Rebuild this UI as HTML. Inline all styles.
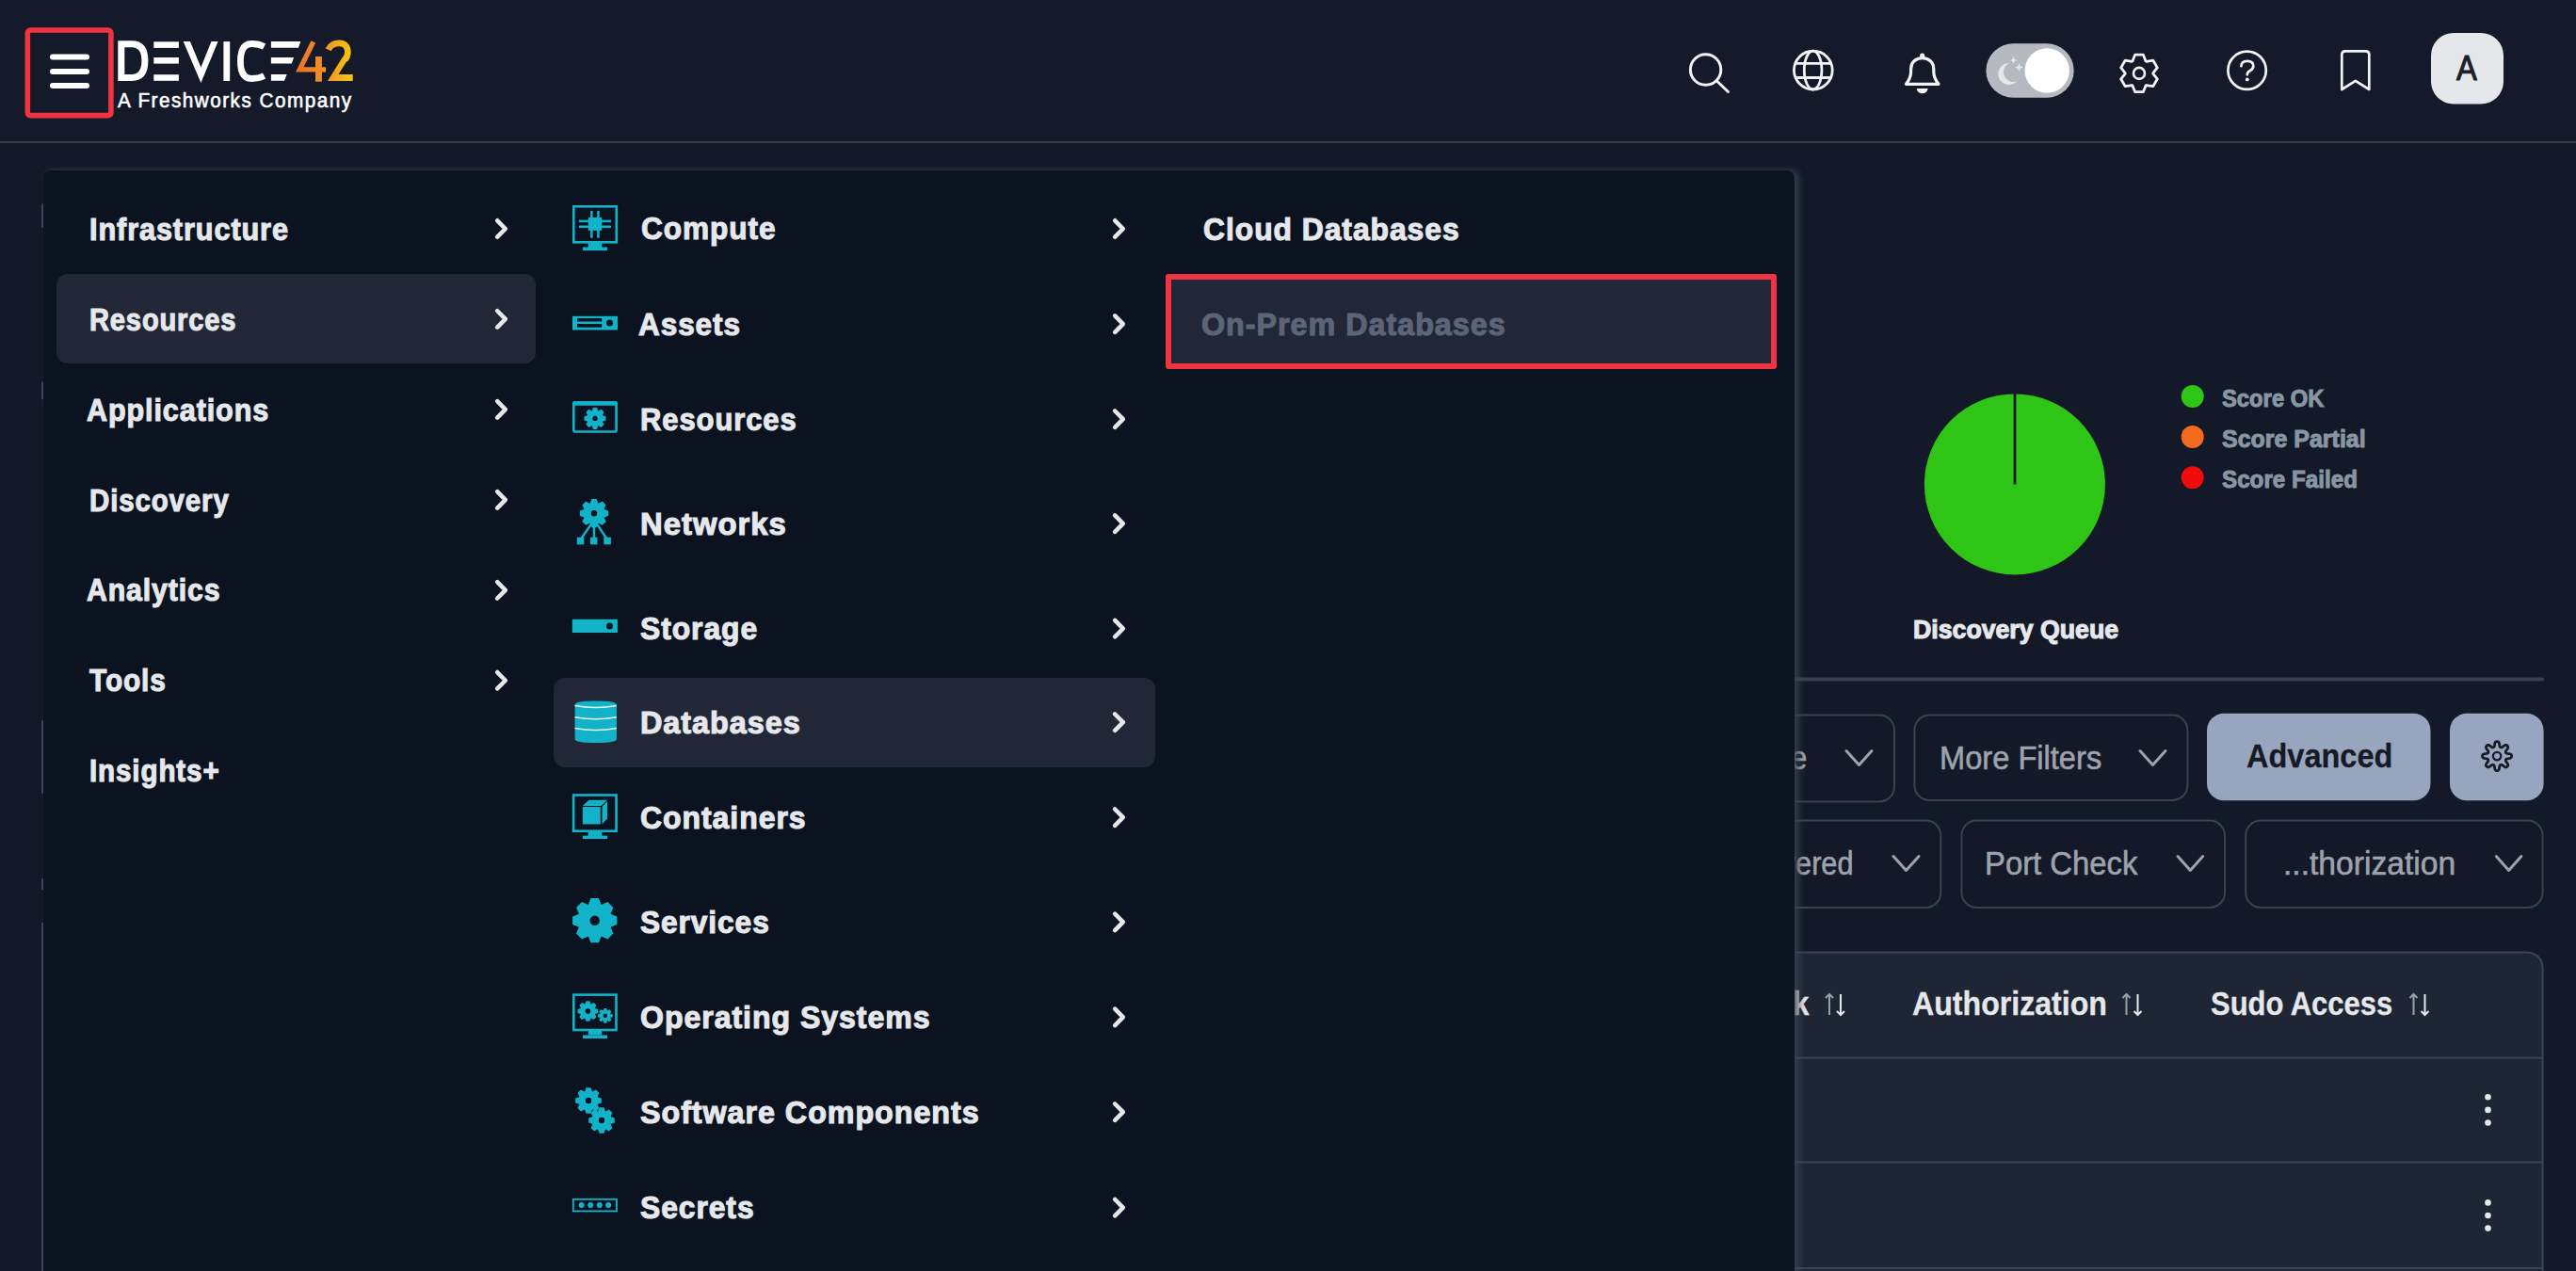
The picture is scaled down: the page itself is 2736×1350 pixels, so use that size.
<!DOCTYPE html>
<html><head><meta charset="utf-8"><style>
html,body{margin:0;padding:0;}
body{width:2736px;height:1350px;overflow:hidden;position:relative;background:#131928;font-family:"Liberation Sans",sans-serif;}
.abs{position:absolute;}
.tx{position:absolute;white-space:nowrap;transform-origin:0 0;}
svg{position:absolute;left:0;top:0;}
</style></head><body>
<svg width="2736" height="1350" viewBox="0 0 2736 1350">
<circle cx="2139.9" cy="514.4" r="96" fill="#2ec516"/>
<rect x="2138.6" y="418" width="2.8" height="96.4" fill="#141a29"/>
<circle cx="2328.7" cy="420.9" r="12" fill="#2ec516"/>
<circle cx="2328.7" cy="464" r="12" fill="#f46a1f"/>
<circle cx="2328.7" cy="507.2" r="12" fill="#f20b0b"/>
<line x1="1800" y1="721.4" x2="2700" y2="721.4" stroke="#3a4150" stroke-width="4" stroke-linecap="round"/>
<rect x="1700" y="759.5" width="312" height="92" rx="16" fill="none" stroke="#3b4250" stroke-width="2"/>
<rect x="2033.4" y="759.5" width="290" height="90.5" rx="16" fill="none" stroke="#3b4250" stroke-width="2"/>
<rect x="2344" y="757.8" width="237.5" height="92.5" rx="18" fill="#97a6be"/>
<rect x="2602" y="757.8" width="99.6" height="92.5" rx="18" fill="#97a6be"/>
<rect x="1700" y="871.5" width="361.3" height="92.4" rx="16" fill="none" stroke="#3b4250" stroke-width="2"/>
<rect x="2083.4" y="871.5" width="279.6" height="92.4" rx="16" fill="none" stroke="#3b4250" stroke-width="2"/>
<rect x="2385.2" y="871.5" width="315.4" height="92.4" rx="16" fill="none" stroke="#3b4250" stroke-width="2"/>
<polyline points="1961,797.5 1974.5,812.5 1988,797.5" fill="none" stroke="#9ea3ab" stroke-width="3" stroke-linecap="round" stroke-linejoin="round"/>
<polyline points="2273,797.5 2286.5,812.5 2300,797.5" fill="none" stroke="#9ea3ab" stroke-width="3" stroke-linecap="round" stroke-linejoin="round"/>
<polyline points="2011,909.5 2024.5,924.5 2038,909.5" fill="none" stroke="#9ea3ab" stroke-width="3" stroke-linecap="round" stroke-linejoin="round"/>
<polyline points="2313,909.5 2326.35,924.5 2339.7,909.5" fill="none" stroke="#9ea3ab" stroke-width="3" stroke-linecap="round" stroke-linejoin="round"/>
<polyline points="2651.3,909.5 2664.6000000000004,924.5 2677.9,909.5" fill="none" stroke="#9ea3ab" stroke-width="3" stroke-linecap="round" stroke-linejoin="round"/>
<path d="M1700,1011.4 H2681.6 Q2700.6,1011.4 2700.6,1030.4 V1360 H1700Z" fill="#1e2636" stroke="#3b4354" stroke-width="2"/>
<rect x="1700" y="1122.7" width="1000" height="2" fill="#3b4354"/>
<rect x="1700" y="1233.4" width="1000" height="2" fill="#3b4354"/>
<rect x="1700" y="1346" width="1000" height="2" fill="#3b4354"/>
<circle cx="2642.5" cy="1165.3000000000002" r="3.3" fill="#e6e7ea"/>
<circle cx="2642.5" cy="1178.9" r="3.3" fill="#e6e7ea"/>
<circle cx="2642.5" cy="1192.5" r="3.3" fill="#e6e7ea"/>
<circle cx="2642.5" cy="1277.4" r="3.3" fill="#e6e7ea"/>
<circle cx="2642.5" cy="1291" r="3.3" fill="#e6e7ea"/>
<circle cx="2642.5" cy="1304.6" r="3.3" fill="#e6e7ea"/>
<path d="M1943,1078 V1056 M1939,1060 L1943,1056 L1947,1060" stroke="#9aa0a8" stroke-width="2" fill="none"/><path d="M1955,1056 V1078 M1951,1074 L1955,1078 L1959,1074" stroke="#e6e7ea" stroke-width="2" fill="none"/>
<path d="M2258.5,1078 V1056 M2254.5,1060 L2258.5,1056 L2262.5,1060" stroke="#9aa0a8" stroke-width="2" fill="none"/><path d="M2270.5,1056 V1078 M2266.5,1074 L2270.5,1078 L2274.5,1074" stroke="#e6e7ea" stroke-width="2" fill="none"/>
<path d="M2563.5,1078 V1056 M2559.5,1060 L2563.5,1056 L2567.5,1060" stroke="#9aa0a8" stroke-width="2" fill="none"/><path d="M2575.5,1056 V1078 M2571.5,1074 L2575.5,1078 L2579.5,1074" stroke="#e6e7ea" stroke-width="2" fill="none"/>
<path d="M2652.10,787.60 L2652.71,787.65 L2653.30,787.83 L2653.86,788.25 L2654.31,789.13 L2654.60,790.55 L2654.78,791.96 L2654.99,792.85 L2655.28,793.32 L2655.61,793.59 L2655.97,793.77 L2656.34,793.89 L2656.77,793.94 L2657.30,793.81 L2658.09,793.33 L2659.21,792.46 L2660.41,791.66 L2661.36,791.36 L2662.05,791.45 L2662.60,791.75 L2663.06,792.14 L2663.45,792.60 L2663.75,793.15 L2663.84,793.84 L2663.54,794.79 L2662.74,795.99 L2661.87,797.11 L2661.39,797.90 L2661.26,798.43 L2661.31,798.86 L2661.43,799.23 L2661.61,799.59 L2661.88,799.92 L2662.35,800.21 L2663.24,800.42 L2664.65,800.60 L2666.07,800.89 L2666.95,801.34 L2667.37,801.90 L2667.55,802.49 L2667.60,803.10 L2667.55,803.71 L2667.37,804.30 L2666.95,804.86 L2666.07,805.31 L2664.65,805.60 L2663.24,805.78 L2662.35,805.99 L2661.88,806.28 L2661.61,806.61 L2661.43,806.97 L2661.31,807.34 L2661.26,807.77 L2661.39,808.30 L2661.87,809.09 L2662.74,810.21 L2663.54,811.41 L2663.84,812.36 L2663.75,813.05 L2663.45,813.60 L2663.06,814.06 L2662.60,814.45 L2662.05,814.75 L2661.36,814.84 L2660.41,814.54 L2659.21,813.74 L2658.09,812.87 L2657.30,812.39 L2656.77,812.26 L2656.34,812.31 L2655.97,812.43 L2655.61,812.61 L2655.28,812.88 L2654.99,813.35 L2654.78,814.24 L2654.60,815.65 L2654.31,817.07 L2653.86,817.95 L2653.30,818.37 L2652.71,818.55 L2652.10,818.60 L2651.49,818.55 L2650.90,818.37 L2650.34,817.95 L2649.89,817.07 L2649.60,815.65 L2649.42,814.24 L2649.21,813.35 L2648.92,812.88 L2648.59,812.61 L2648.23,812.43 L2647.86,812.31 L2647.43,812.26 L2646.90,812.39 L2646.11,812.87 L2644.99,813.74 L2643.79,814.54 L2642.84,814.84 L2642.15,814.75 L2641.60,814.45 L2641.14,814.06 L2640.75,813.60 L2640.45,813.05 L2640.36,812.36 L2640.66,811.41 L2641.46,810.21 L2642.33,809.09 L2642.81,808.30 L2642.94,807.77 L2642.89,807.34 L2642.77,806.97 L2642.59,806.61 L2642.32,806.28 L2641.85,805.99 L2640.96,805.78 L2639.55,805.60 L2638.13,805.31 L2637.25,804.86 L2636.83,804.30 L2636.65,803.71 L2636.60,803.10 L2636.65,802.49 L2636.83,801.90 L2637.25,801.34 L2638.13,800.89 L2639.55,800.60 L2640.96,800.42 L2641.85,800.21 L2642.32,799.92 L2642.59,799.59 L2642.77,799.23 L2642.89,798.86 L2642.94,798.43 L2642.81,797.90 L2642.33,797.11 L2641.46,795.99 L2640.66,794.79 L2640.36,793.84 L2640.45,793.15 L2640.75,792.60 L2641.14,792.14 L2641.60,791.75 L2642.15,791.45 L2642.84,791.36 L2643.79,791.66 L2644.99,792.46 L2646.11,793.33 L2646.90,793.81 L2647.43,793.94 L2647.86,793.89 L2648.23,793.77 L2648.59,793.59 L2648.92,793.32 L2649.21,792.85 L2649.42,791.96 L2649.60,790.55 L2649.89,789.13 L2650.34,788.25 L2650.90,787.83 L2651.49,787.65Z" fill="none" stroke="#161b26" stroke-width="2.8" stroke-linejoin="round"/><circle cx="2652.1" cy="803.1" r="4.2" fill="none" stroke="#161b26" stroke-width="2.3"/>
<rect x="44" y="216.5" width="2" height="25.30000000000001" fill="#3e4757"/>
<rect x="44" y="405.5" width="2" height="18.80000000000001" fill="#3e4757"/>
<rect x="44" y="765" width="2" height="78" fill="#3e4757"/>
<rect x="44" y="933" width="2" height="12" fill="#3e4757"/>
<rect x="44" y="980" width="2" height="370" fill="#3e4757"/>
</svg>
<div class="abs" id="ptexts">
</div>
<div class="tx" id="t22" style="left:2359.82px;top:410.17px;font-size:26.02px;line-height:26.02px;color:#8796a2;font-weight:bold;-webkit-text-stroke:1.0px #8796a2;transform:scaleX(0.9143)">Score OK</div>
<div class="tx" id="t23" style="left:2359.83px;top:453.79px;font-size:25.29px;line-height:25.29px;color:#8796a2;font-weight:bold;-webkit-text-stroke:1.0px #8796a2;transform:scaleX(0.9876)">Score Partial</div>
<div class="tx" id="t24" style="left:2359.84px;top:496.69px;font-size:25.29px;line-height:25.29px;color:#8796a2;font-weight:bold;-webkit-text-stroke:1.0px #8796a2;transform:scaleX(0.9573)">Score Failed</div>
<div class="tx" id="t25" style="left:2031.90px;top:655.32px;font-size:27.62px;line-height:27.62px;color:#e6e8eb;font-weight:bold;-webkit-text-stroke:1.1px #e6e8eb;transform:scaleX(0.9667)">Discovery Queue</div>
<div class="tx" id="t26" style="left:1852.00px;top:786.99px;font-size:35.32px;line-height:35.32px;color:#9ea3ab;font-weight:normal;-webkit-text-stroke:0.6px #9ea3ab;transform:scaleX(0.8800)">Type</div>
<div class="tx" id="t27" style="left:2059.72px;top:786.99px;font-size:35.32px;line-height:35.32px;color:#9ea3ab;font-weight:normal;-webkit-text-stroke:0.6px #9ea3ab;transform:scaleX(0.9238)">More Filters</div>
<div class="tx" id="t28" style="left:2385.73px;top:786.36px;font-size:34.88px;line-height:34.88px;color:#151a24;font-weight:bold;-webkit-text-stroke:0.3px #151a24;transform:scaleX(0.9320)">Advanced</div>
<div class="tx" id="t29" style="left:1815.00px;top:900.46px;font-size:34.88px;line-height:34.88px;color:#9ea3ab;font-weight:normal;-webkit-text-stroke:0.6px #9ea3ab;transform:scaleX(0.8800)">Discovered</div>
<div class="tx" id="t30" style="left:2108.07px;top:900.46px;font-size:34.88px;line-height:34.88px;color:#9ea3ab;font-weight:normal;-webkit-text-stroke:0.6px #9ea3ab;transform:scaleX(0.9417)">Port Check</div>
<div class="tx" id="t31" style="left:2425.03px;top:900.46px;font-size:34.88px;line-height:34.88px;color:#9ea3ab;font-weight:normal;-webkit-text-stroke:0.6px #9ea3ab;transform:scaleX(0.9638)">...thorization</div>
<div class="tx" id="t32" style="left:1755.50px;top:1048.75px;font-size:35.61px;line-height:35.61px;color:#e6e7ea;font-weight:bold;-webkit-text-stroke:0.3px #e6e7ea;transform:scaleX(0.8800)">Port Check</div>
<div class="tx" id="t33" style="left:2030.78px;top:1048.75px;font-size:35.61px;line-height:35.61px;color:#e6e7ea;font-weight:bold;-webkit-text-stroke:0.3px #e6e7ea;transform:scaleX(0.9020)">Authorization</div>
<div class="tx" id="t34" style="left:2347.80px;top:1048.75px;font-size:35.61px;line-height:35.61px;color:#e6e7ea;font-weight:bold;-webkit-text-stroke:0.3px #e6e7ea;transform:scaleX(0.8688)">Sudo Access</div>
<div class="abs" style="left:46px;top:181px;width:1860px;height:1200px;background:#0b1321;border-radius:8px 8px 0 0;box-shadow:5px 0 7px rgba(62,70,86,0.75), 0 -2px 4px rgba(52,58,72,0.25);"></div>
<div class="abs" style="left:60px;top:291px;width:509px;height:95.3px;background:#212736;border-radius:12px;"></div>
<div class="abs" style="left:587.7px;top:720.4px;width:639px;height:95.1px;background:#212736;border-radius:12px;"></div>
<div class="abs" style="left:1238.3px;top:291.2px;width:648.4px;height:100.6px;background:#212736;border:6px solid #ef3340;box-sizing:border-box;border-radius:3px;"></div>
<div class="abs" style="left:0;top:0;width:2736px;height:150px;background:#141a29;"></div>
<div class="abs" style="left:0;top:150px;width:2736px;height:2px;background:#373e4c;"></div>
<svg width="2736" height="1350" viewBox="0 0 2736 1350">
<polyline points="528.20,234.30 536.80,243.00 528.20,251.70" fill="none" stroke="#e6e8eb" stroke-width="4.6" stroke-linecap="round" stroke-linejoin="round"/>
<polyline points="528.20,330.25 536.80,338.95 528.20,347.65" fill="none" stroke="#e6e8eb" stroke-width="4.6" stroke-linecap="round" stroke-linejoin="round"/>
<polyline points="528.20,426.20 536.80,434.90 528.20,443.60" fill="none" stroke="#e6e8eb" stroke-width="4.6" stroke-linecap="round" stroke-linejoin="round"/>
<polyline points="528.20,522.15 536.80,530.85 528.20,539.55" fill="none" stroke="#e6e8eb" stroke-width="4.6" stroke-linecap="round" stroke-linejoin="round"/>
<polyline points="528.20,618.10 536.80,626.80 528.20,635.50" fill="none" stroke="#e6e8eb" stroke-width="4.6" stroke-linecap="round" stroke-linejoin="round"/>
<polyline points="528.20,714.05 536.80,722.75 528.20,731.45" fill="none" stroke="#e6e8eb" stroke-width="4.6" stroke-linecap="round" stroke-linejoin="round"/>
<polyline points="1184.20,234.30 1192.80,243.00 1184.20,251.70" fill="none" stroke="#e6e8eb" stroke-width="4.6" stroke-linecap="round" stroke-linejoin="round"/>
<polyline points="1184.20,335.40 1192.80,344.10 1184.20,352.80" fill="none" stroke="#e6e8eb" stroke-width="4.6" stroke-linecap="round" stroke-linejoin="round"/>
<polyline points="1184.20,436.50 1192.80,445.20 1184.20,453.90" fill="none" stroke="#e6e8eb" stroke-width="4.6" stroke-linecap="round" stroke-linejoin="round"/>
<polyline points="1184.20,547.40 1192.80,556.10 1184.20,564.80" fill="none" stroke="#e6e8eb" stroke-width="4.6" stroke-linecap="round" stroke-linejoin="round"/>
<polyline points="1184.20,658.90 1192.80,667.60 1184.20,676.30" fill="none" stroke="#e6e8eb" stroke-width="4.6" stroke-linecap="round" stroke-linejoin="round"/>
<polyline points="1184.20,758.50 1192.80,767.20 1184.20,775.90" fill="none" stroke="#e6e8eb" stroke-width="4.6" stroke-linecap="round" stroke-linejoin="round"/>
<polyline points="1184.20,859.50 1192.80,868.20 1184.20,876.90" fill="none" stroke="#e6e8eb" stroke-width="4.6" stroke-linecap="round" stroke-linejoin="round"/>
<polyline points="1184.20,970.70 1192.80,979.40 1184.20,988.10" fill="none" stroke="#e6e8eb" stroke-width="4.6" stroke-linecap="round" stroke-linejoin="round"/>
<polyline points="1184.20,1071.70 1192.80,1080.40 1184.20,1089.10" fill="none" stroke="#e6e8eb" stroke-width="4.6" stroke-linecap="round" stroke-linejoin="round"/>
<polyline points="1184.20,1172.50 1192.80,1181.20 1184.20,1189.90" fill="none" stroke="#e6e8eb" stroke-width="4.6" stroke-linecap="round" stroke-linejoin="round"/>
<polyline points="1184.20,1274.00 1192.80,1282.70 1184.20,1291.40" fill="none" stroke="#e6e8eb" stroke-width="4.6" stroke-linecap="round" stroke-linejoin="round"/>
<rect x="609.3" y="219.3" width="45.5" height="38" fill="none" stroke="#12b3c8" stroke-width="2.6"/>
<rect x="624.8" y="258" width="14.4" height="5" fill="#12b3c8"/><rect x="618.9" y="262.5" width="26.2" height="3.6" fill="#12b3c8"/>
<rect x="624.8" y="231" width="14.4" height="13.8" fill="#12b3c8"/>
<rect x="627.1" y="223.9" width="2.5" height="28.8" fill="#12b3c8"/><rect x="634.2" y="223.9" width="2.5" height="28.8" fill="#12b3c8"/>
<rect x="614.9" y="233.6" width="34.1" height="2.5" fill="#12b3c8"/><rect x="614.9" y="239.5" width="34.1" height="2.5" fill="#12b3c8"/>
<path d="M608,335.7 H656 V350.5 H608Z M613,338 V341.6 H639.2 V338Z M613,344 V347.8 H639.2 V344Z M644,343 a3.5,3.5 0 1,0 7,0 a3.5,3.5 0 1,0 -7,0Z" fill="#12b3c8" fill-rule="evenodd"/>
<rect x="609.3" y="427.5" width="45.3" height="31" rx="1.5" fill="none" stroke="#12b3c8" stroke-width="2.6"/>
<rect x="608" y="426.3" width="47.8" height="4.5" rx="1.5" fill="#12b3c8"/>
<path d="M628.87,436.39 L629.94,432.88 L634.06,432.88 L635.13,436.39 L635.45,436.52 L638.69,434.80 L641.60,437.71 L639.88,440.95 L640.01,441.27 L643.52,442.34 L643.52,446.46 L640.01,447.53 L639.88,447.85 L641.60,451.09 L638.69,454.00 L635.45,452.28 L635.13,452.41 L634.06,455.92 L629.94,455.92 L628.87,452.41 L628.55,452.28 L625.31,454.00 L622.40,451.09 L624.12,447.85 L623.99,447.53 L620.48,446.46 L620.48,442.34 L623.99,441.27 L624.12,440.95 L622.40,437.71 L625.31,434.80 L628.55,436.52Z M629.4,444.4 a2.6,2.6 0 1,0 5.2,0 a2.6,2.6 0 1,0 -5.2,0Z" fill="#12b3c8" fill-rule="evenodd"/>
<path d="M626.81,534.49 L628.29,530.04 L633.71,530.04 L635.19,534.49 L635.61,534.66 L639.81,532.57 L643.63,536.39 L641.54,540.59 L641.71,541.01 L646.16,542.49 L646.16,547.91 L641.71,549.39 L641.54,549.81 L643.63,554.01 L639.81,557.83 L635.61,555.74 L635.19,555.91 L633.71,560.36 L628.29,560.36 L626.81,555.91 L626.39,555.74 L622.19,557.83 L618.37,554.01 L620.46,549.81 L620.29,549.39 L615.84,547.91 L615.84,542.49 L620.29,541.01 L620.46,540.59 L618.37,536.39 L622.19,532.57 L626.39,534.66Z M627.8,545.2 a3.2,3.2 0 1,0 6.4,0 a3.2,3.2 0 1,0 -6.4,0Z" fill="#12b3c8" fill-rule="evenodd"/>
<path d="M628.5,556 L616.5,573 M631,556 V573 M633.5,556 L645,573" stroke="#12b3c8" stroke-width="2.4" fill="none"/>
<rect x="612.8" y="570.7" width="7.5" height="7.6" fill="#12b3c8"/><rect x="626.9" y="570.7" width="7.5" height="7.6" fill="#12b3c8"/><rect x="641.3" y="570.7" width="7.6" height="7.6" fill="#12b3c8"/>
<path d="M607.8,657.8 H655.9 V672.1 H607.8Z M644,665 a3.5,3.5 0 1,0 7,0 a3.5,3.5 0 1,0 -7,0Z" fill="#12b3c8" fill-rule="evenodd"/>
<path d="M610.6,748.5 Q610.6,744.4 632.7,744.4 Q654.9,744.4 654.9,748.5 V785 Q654.9,789 632.7,789 Q610.6,789 610.6,785Z" fill="#12b3c8"/>
<path d="M610.6,749.5 Q632.7,753.5 654.9,749.5" stroke="#e8f4f6" stroke-width="1.6" fill="none"/>
<path d="M610.6,761.8 Q632.7,765.8 654.9,761.8" stroke="#e8f4f6" stroke-width="1.6" fill="none"/>
<path d="M610.6,773.5 Q632.7,777.5 654.9,773.5" stroke="#e8f4f6" stroke-width="1.6" fill="none"/>
<rect x="609.1" y="844.5" width="45.5" height="38.2" fill="none" stroke="#12b3c8" stroke-width="2.6"/>
<rect x="624.8" y="883" width="14.4" height="5" fill="#12b3c8"/><rect x="618.9" y="887.6" width="26.2" height="3.4" fill="#12b3c8"/>
<path d="M618.8,856 L625.5,849.8 H645 L638.5,856Z" fill="#12b3c8"/><rect x="618.8" y="857" width="19" height="18.4" fill="#12b3c8"/><path d="M639.5,857 L645,851 V869.5 L639.5,875.4Z" fill="#12b3c8"/>
<path d="M624.96,960.47 L627.48,954.07 L635.92,954.07 L638.44,960.47 L639.11,960.75 L645.42,958.01 L651.39,963.98 L648.65,970.29 L648.93,970.96 L655.33,973.48 L655.33,981.92 L648.93,984.44 L648.65,985.11 L651.39,991.42 L645.42,997.39 L639.11,994.65 L638.44,994.93 L635.92,1001.33 L627.48,1001.33 L624.96,994.93 L624.29,994.65 L617.98,997.39 L612.01,991.42 L614.75,985.11 L614.47,984.44 L608.07,981.92 L608.07,973.48 L614.47,970.96 L614.75,970.29 L612.01,963.98 L617.98,958.01 L624.29,960.75Z M626.5,977.7 a5.2,5.2 0 1,0 10.4,0 a5.2,5.2 0 1,0 -10.4,0Z" fill="#12b3c8" fill-rule="evenodd"/>
<rect x="609.3" y="1056.6" width="45.2" height="37.4" fill="none" stroke="#12b3c8" stroke-width="2.6"/>
<rect x="624.8" y="1094" width="14.4" height="5.5" fill="#12b3c8"/><rect x="618.9" y="1099.5" width="26.2" height="3.5" fill="#12b3c8"/>
<path d="M621.41,1066.36 L622.47,1063.17 L626.33,1063.17 L627.39,1066.36 L627.69,1066.49 L630.69,1064.98 L633.42,1067.71 L631.91,1070.71 L632.04,1071.01 L635.23,1072.07 L635.23,1075.93 L632.04,1076.99 L631.91,1077.29 L633.42,1080.29 L630.69,1083.02 L627.69,1081.51 L627.39,1081.64 L626.33,1084.83 L622.47,1084.83 L621.41,1081.64 L621.11,1081.51 L618.11,1083.02 L615.38,1080.29 L616.89,1077.29 L616.76,1076.99 L613.57,1075.93 L613.57,1072.07 L616.76,1071.01 L616.89,1070.71 L615.38,1067.71 L618.11,1064.98 L621.11,1066.49Z M621.6,1074 a2.8,2.8 0 1,0 5.6,0 a2.8,2.8 0 1,0 -5.6,0Z" fill="#12b3c8" fill-rule="evenodd"/>
<path d="M640.69,1073.40 L641.39,1070.92 L644.21,1070.92 L644.91,1073.40 L645.12,1073.49 L647.37,1072.24 L649.36,1074.23 L648.11,1076.48 L648.20,1076.69 L650.68,1077.39 L650.68,1080.21 L648.20,1080.91 L648.11,1081.12 L649.36,1083.37 L647.37,1085.36 L645.12,1084.11 L644.91,1084.20 L644.21,1086.68 L641.39,1086.68 L640.69,1084.20 L640.48,1084.11 L638.23,1085.36 L636.24,1083.37 L637.49,1081.12 L637.40,1080.91 L634.92,1080.21 L634.92,1077.39 L637.40,1076.69 L637.49,1076.48 L636.24,1074.23 L638.23,1072.24 L640.48,1073.49Z M640.5999999999999,1078.8 a2.2,2.2 0 1,0 4.4,0 a2.2,2.2 0 1,0 -4.4,0Z" fill="#12b3c8" fill-rule="evenodd"/>
<path d="M621.17,1159.22 L622.54,1155.22 L627.46,1155.22 L628.83,1159.22 L629.21,1159.38 L633.01,1157.51 L636.49,1160.99 L634.62,1164.79 L634.78,1165.17 L638.78,1166.54 L638.78,1171.46 L634.78,1172.83 L634.62,1173.21 L636.49,1177.01 L633.01,1180.49 L629.21,1178.62 L628.83,1178.78 L627.46,1182.78 L622.54,1182.78 L621.17,1178.78 L620.79,1178.62 L616.99,1180.49 L613.51,1177.01 L615.38,1173.21 L615.22,1172.83 L611.22,1171.46 L611.22,1166.54 L615.22,1165.17 L615.38,1164.79 L613.51,1160.99 L616.99,1157.51 L620.79,1159.38Z M621.8,1169 a3.2,3.2 0 1,0 6.4,0 a3.2,3.2 0 1,0 -6.4,0Z" fill="#12b3c8" fill-rule="evenodd"/>
<path d="M635.17,1180.22 L636.54,1176.22 L641.46,1176.22 L642.83,1180.22 L643.21,1180.38 L647.01,1178.51 L650.49,1181.99 L648.62,1185.79 L648.78,1186.17 L652.78,1187.54 L652.78,1192.46 L648.78,1193.83 L648.62,1194.21 L650.49,1198.01 L647.01,1201.49 L643.21,1199.62 L642.83,1199.78 L641.46,1203.78 L636.54,1203.78 L635.17,1199.78 L634.79,1199.62 L630.99,1201.49 L627.51,1198.01 L629.38,1194.21 L629.22,1193.83 L625.22,1192.46 L625.22,1187.54 L629.22,1186.17 L629.38,1185.79 L627.51,1181.99 L630.99,1178.51 L634.79,1180.38Z M635.8,1190 a3.2,3.2 0 1,0 6.4,0 a3.2,3.2 0 1,0 -6.4,0Z" fill="#12b3c8" fill-rule="evenodd"/>
<rect x="608.8" y="1273.8" width="46.2" height="12.6" fill="none" stroke="#12b3c8" stroke-width="1.8"/>
<circle cx="617.6" cy="1280" r="3" fill="#12b3c8"/>
<circle cx="627.2" cy="1280" r="3" fill="#12b3c8"/>
<circle cx="636.8" cy="1280" r="3" fill="#12b3c8"/>
<circle cx="646.2" cy="1280" r="3" fill="#12b3c8"/>
<rect x="29.3" y="32" width="88.6" height="90.6" rx="3" fill="none" stroke="#ef3340" stroke-width="5.6"/>
<line x1="56" y1="60.6" x2="92" y2="60.6" stroke="#ffffff" stroke-width="6" stroke-linecap="round"/>
<line x1="56" y1="76" x2="92" y2="76" stroke="#ffffff" stroke-width="6" stroke-linecap="round"/>
<line x1="56" y1="91" x2="92" y2="91" stroke="#ffffff" stroke-width="6" stroke-linecap="round"/>
<path d="M128.8,46.8 H140 Q153.9,46.8 153.9,64.6 Q153.9,82.5 140,82.5 H128.8Z" fill="none" stroke="#ffffff" stroke-width="7"/>
<rect x="163.3" y="44.3" width="26.6" height="6.6" fill="#ffffff"/>
<rect x="163.3" y="61.0" width="26.6" height="6.6" fill="#ffffff"/>
<rect x="163.3" y="79.2" width="26.6" height="6.6" fill="#ffffff"/>
<path d="M194.7,44.1 H201.9 L213.4,71.6 L224.5,44.1 H231.6 L213.4,88Z" fill="#ffffff"/>
<rect x="237.4" y="44.1" width="6.8" height="41.9" fill="#ffffff"/>
<path d="M280.6,49.5 Q275,46.5 267.5,46.5 Q255.4,46.5 255.4,65 Q255.4,83.5 267.5,83.5 Q275,83.5 280.6,80.6" fill="none" stroke="#ffffff" stroke-width="6.8"/>
<path d="M287.9,44 H319.3 L317,50.7 H287.9Z M287.9,61 H312.1 L309.8,67.5 H287.9Z M287.9,79 H304.7 L302,85.8 H287.9Z" fill="#ffffff"/>
<defs><linearGradient id="lg" x1="314" y1="0" x2="375" y2="0" gradientUnits="userSpaceOnUse"><stop offset="0" stop-color="#ec6f2a"/><stop offset="0.5" stop-color="#f19224"/><stop offset="1" stop-color="#f7c80f"/></linearGradient></defs>
<path d="M332.8,44.3 L318.3,73.9 H346.1" fill="none" stroke="url(#lg)" stroke-width="5.3" stroke-linejoin="miter"/><rect x="335" y="60" width="6.9" height="26.7" fill="url(#lg)"/>
<path d="M348.6,52.8 C351,47.8 355.5,45.9 360.6,45.9 C366.6,45.9 369.4,50.2 369.4,55.2 C369.4,58.5 368.5,60.8 366.3,63.6" fill="none" stroke="url(#lg)" stroke-width="6.6"/><path d="M348,86 H374.7 V79.1 H359.5 L369.2,63.6 L363.6,60.9 Z" fill="url(#lg)"/>
<circle cx="1811.6" cy="74" r="16.2" fill="none" stroke="#f2f3f5" stroke-width="3"/><line x1="1823.5" y1="86" x2="1835.5" y2="97.5" stroke="#f2f3f5" stroke-width="3" stroke-linecap="round"/>
<g fill="none" stroke="#f2f3f5" stroke-width="2.8"><circle cx="1925.8" cy="74.6" r="20.4"/><ellipse cx="1925.6" cy="74.6" rx="9.3" ry="20.4"/><line x1="1906" y1="67.4" x2="1945.6" y2="67.4"/><line x1="1906" y1="82.5" x2="1945.6" y2="82.5"/></g>
<path d="M2024.5,89.3 H2059 Q2053.8,83 2053.8,76 V73.5 C2053.8,66 2048.5,61.6 2041.7,61.6 C2034.9,61.6 2029.6,66 2029.6,73.5 V76 Q2029.6,83 2024.5,89.3Z" fill="none" stroke="#f2f3f5" stroke-width="3.2" stroke-linejoin="round"/><circle cx="2041.7" cy="59" r="2.6" fill="#f2f3f5"/><path d="M2035.8,94 H2047.6 A5.9,5.4 0 0,1 2035.8,94Z" fill="#f2f3f5"/>
<rect x="2109.4" y="46.2" width="93.3" height="57.6" rx="28.8" fill="#b6b9c0"/><circle cx="2174.2" cy="75" r="23.7" fill="#ffffff"/>
<path d="M2134,67 A11.5,11.5 0 1,0 2142.5,86 A9,9 0 1,1 2134,67Z" fill="#e6e8eb"/>
<path d="M2138.5,60 l1,3 3,1 -3,1 -1,3 -1,-3 -3,-1 3,-1Z M2144.5,67 l1.2,3.3 3.3,1.2 -3.3,1.2 -1.2,3.3 -1.2,-3.3 -3.3,-1.2 3.3,-1.2Z" fill="#e6e8eb"/>
<g transform="translate(2272,77.9)"><path d="M-7.06,-13.01 L-4.41,-19.71 L4.41,-19.71 L7.06,-13.01 L7.73,-12.62 L14.87,-13.67 L19.28,-6.04 L14.79,-0.39 L14.79,0.39 L19.28,6.04 L14.87,13.67 L7.73,12.62 L7.06,13.01 L4.41,19.71 L-4.41,19.71 L-7.06,13.01 L-7.73,12.62 L-14.87,13.67 L-19.28,6.04 L-14.79,0.39 L-14.79,-0.39 L-19.28,-6.04 L-14.87,-13.67 L-7.73,-12.62Z" fill="none" stroke="#f2f3f5" stroke-width="2.8" stroke-linejoin="round"/><circle r="6" fill="none" stroke="#f2f3f5" stroke-width="2.6"/></g>
<circle cx="2386.6" cy="74.75" r="20.2" fill="none" stroke="#f2f3f5" stroke-width="2.7"/><path d="M2380.4,70.2 Q2380.4,64.8 2387,64.8 Q2393.3,64.8 2393.3,70 Q2393.3,73.3 2389.6,75.3 Q2386.8,76.8 2386.8,79.3" fill="none" stroke="#f2f3f5" stroke-width="2.7" stroke-linecap="round"/><circle cx="2386.8" cy="84.4" r="1.9" fill="#f2f3f5"/>
<path d="M2487.3,95 V58 Q2487.3,54.4 2491,54.4 H2512.6 Q2516.3,54.4 2516.3,58 V95 L2501.8,85.8Z" fill="none" stroke="#f2f3f5" stroke-width="2.7" stroke-linejoin="round"/>
<rect x="2582" y="35" width="77" height="75.6" rx="24" fill="#e5e7ea"/>
</svg>
<div class="tx" id="t0" style="left:125.17px;top:96.02px;font-size:21.95px;line-height:21.95px;color:#ffffff;font-weight:normal;-webkit-text-stroke:0.6px #ffffff;letter-spacing:1.6px;transform:scaleX(0.9421)">A Freshworks Company</div>
<div class="tx" id="t1" style="left:2608.83px;top:55.08px;font-size:36.05px;line-height:36.05px;color:#1b202b;font-weight:normal;-webkit-text-stroke:1.0px #1b202b;transform:scaleX(0.9077)">A</div>
<div class="tx" id="t2" style="left:94.53px;top:226.67px;font-size:33.58px;line-height:33.58px;color:#e6e8eb;font-weight:bold;-webkit-text-stroke:1.1px #e6e8eb;letter-spacing:1.0px;transform:scaleX(0.9121)">Infrastructure</div>
<div class="tx" id="t3" style="left:94.61px;top:322.62px;font-size:33.58px;line-height:33.58px;color:#e6e8eb;font-weight:bold;-webkit-text-stroke:1.1px #e6e8eb;letter-spacing:1.0px;transform:scaleX(0.8650)">Resources</div>
<div class="tx" id="t4" style="left:91.97px;top:418.57px;font-size:33.58px;line-height:33.58px;color:#e6e8eb;font-weight:bold;-webkit-text-stroke:1.1px #e6e8eb;letter-spacing:1.0px;transform:scaleX(0.9092)">Applications</div>
<div class="tx" id="t5" style="left:94.59px;top:514.52px;font-size:33.58px;line-height:33.58px;color:#e6e8eb;font-weight:bold;-webkit-text-stroke:1.1px #e6e8eb;letter-spacing:1.0px;transform:scaleX(0.8767)">Discovery</div>
<div class="tx" id="t6" style="left:91.98px;top:610.47px;font-size:33.58px;line-height:33.58px;color:#e6e8eb;font-weight:bold;-webkit-text-stroke:1.1px #e6e8eb;letter-spacing:1.0px;transform:scaleX(0.9002)">Analytics</div>
<div class="tx" id="t7" style="left:95.39px;top:706.42px;font-size:33.58px;line-height:33.58px;color:#e6e8eb;font-weight:bold;-webkit-text-stroke:1.1px #e6e8eb;letter-spacing:1.0px;transform:scaleX(0.8883)">Tools</div>
<div class="tx" id="t8" style="left:94.59px;top:802.37px;font-size:33.58px;line-height:33.58px;color:#e6e8eb;font-weight:bold;-webkit-text-stroke:1.1px #e6e8eb;letter-spacing:1.0px;transform:scaleX(0.8807)">Insights+</div>
<div class="tx" id="t9" style="left:680.93px;top:226.47px;font-size:33.58px;line-height:33.58px;color:#e6e8eb;font-weight:bold;-webkit-text-stroke:1.1px #e6e8eb;letter-spacing:1.0px;transform:scaleX(0.9411)">Compute</div>
<div class="tx" id="t10" style="left:677.70px;top:327.57px;font-size:33.58px;line-height:33.58px;color:#e6e8eb;font-weight:bold;-webkit-text-stroke:1.1px #e6e8eb;letter-spacing:1.0px;transform:scaleX(0.9382)">Assets</div>
<div class="tx" id="t11" style="left:680.33px;top:428.67px;font-size:33.58px;line-height:33.58px;color:#e6e8eb;font-weight:bold;-webkit-text-stroke:1.1px #e6e8eb;letter-spacing:1.0px;transform:scaleX(0.9219)">Resources</div>
<div class="tx" id="t12" style="left:679.99px;top:539.57px;font-size:33.58px;line-height:33.58px;color:#e6e8eb;font-weight:bold;-webkit-text-stroke:1.1px #e6e8eb;letter-spacing:1.0px;transform:scaleX(0.9786)">Networks</div>
<div class="tx" id="t13" style="left:680.00px;top:651.07px;font-size:33.58px;line-height:33.58px;color:#e6e8eb;font-weight:bold;-webkit-text-stroke:1.1px #e6e8eb;letter-spacing:1.0px;transform:scaleX(0.9476)">Storage</div>
<div class="tx" id="t14" style="left:679.73px;top:750.67px;font-size:33.58px;line-height:33.58px;color:#e6e8eb;font-weight:bold;-webkit-text-stroke:1.1px #e6e8eb;letter-spacing:1.0px;transform:scaleX(0.9652)">Databases</div>
<div class="tx" id="t15" style="left:680.05px;top:851.67px;font-size:33.58px;line-height:33.58px;color:#e6e8eb;font-weight:bold;-webkit-text-stroke:1.1px #e6e8eb;letter-spacing:1.0px;transform:scaleX(0.9522)">Containers</div>
<div class="tx" id="t16" style="left:680.00px;top:962.87px;font-size:33.58px;line-height:33.58px;color:#e6e8eb;font-weight:bold;-webkit-text-stroke:1.1px #e6e8eb;letter-spacing:1.0px;transform:scaleX(0.9419)">Services</div>
<div class="tx" id="t17" style="left:680.04px;top:1063.87px;font-size:33.58px;line-height:33.58px;color:#e6e8eb;font-weight:bold;-webkit-text-stroke:1.1px #e6e8eb;letter-spacing:1.0px;transform:scaleX(0.9552)">Operating Systems</div>
<div class="tx" id="t18" style="left:680.00px;top:1164.67px;font-size:33.58px;line-height:33.58px;color:#e6e8eb;font-weight:bold;-webkit-text-stroke:1.1px #e6e8eb;letter-spacing:1.0px;transform:scaleX(0.9609)">Software Components</div>
<div class="tx" id="t19" style="left:680.00px;top:1266.17px;font-size:33.58px;line-height:33.58px;color:#e6e8eb;font-weight:bold;-webkit-text-stroke:1.1px #e6e8eb;letter-spacing:1.0px;transform:scaleX(0.9469)">Secrets</div>
<div class="tx" id="t20" style="left:1278.38px;top:227.06px;font-size:32.99px;line-height:32.99px;color:#e6e8eb;font-weight:bold;-webkit-text-stroke:1.1px #e6e8eb;letter-spacing:1.0px;transform:scaleX(0.9644)">Cloud Databases</div>
<div class="tx" id="t21" style="left:1276.21px;top:328.06px;font-size:32.99px;line-height:32.99px;color:#5b6577;font-weight:bold;-webkit-text-stroke:1.1px #5b6577;letter-spacing:1.0px;transform:scaleX(0.9793)">On-Prem Databases</div>
</body></html>
